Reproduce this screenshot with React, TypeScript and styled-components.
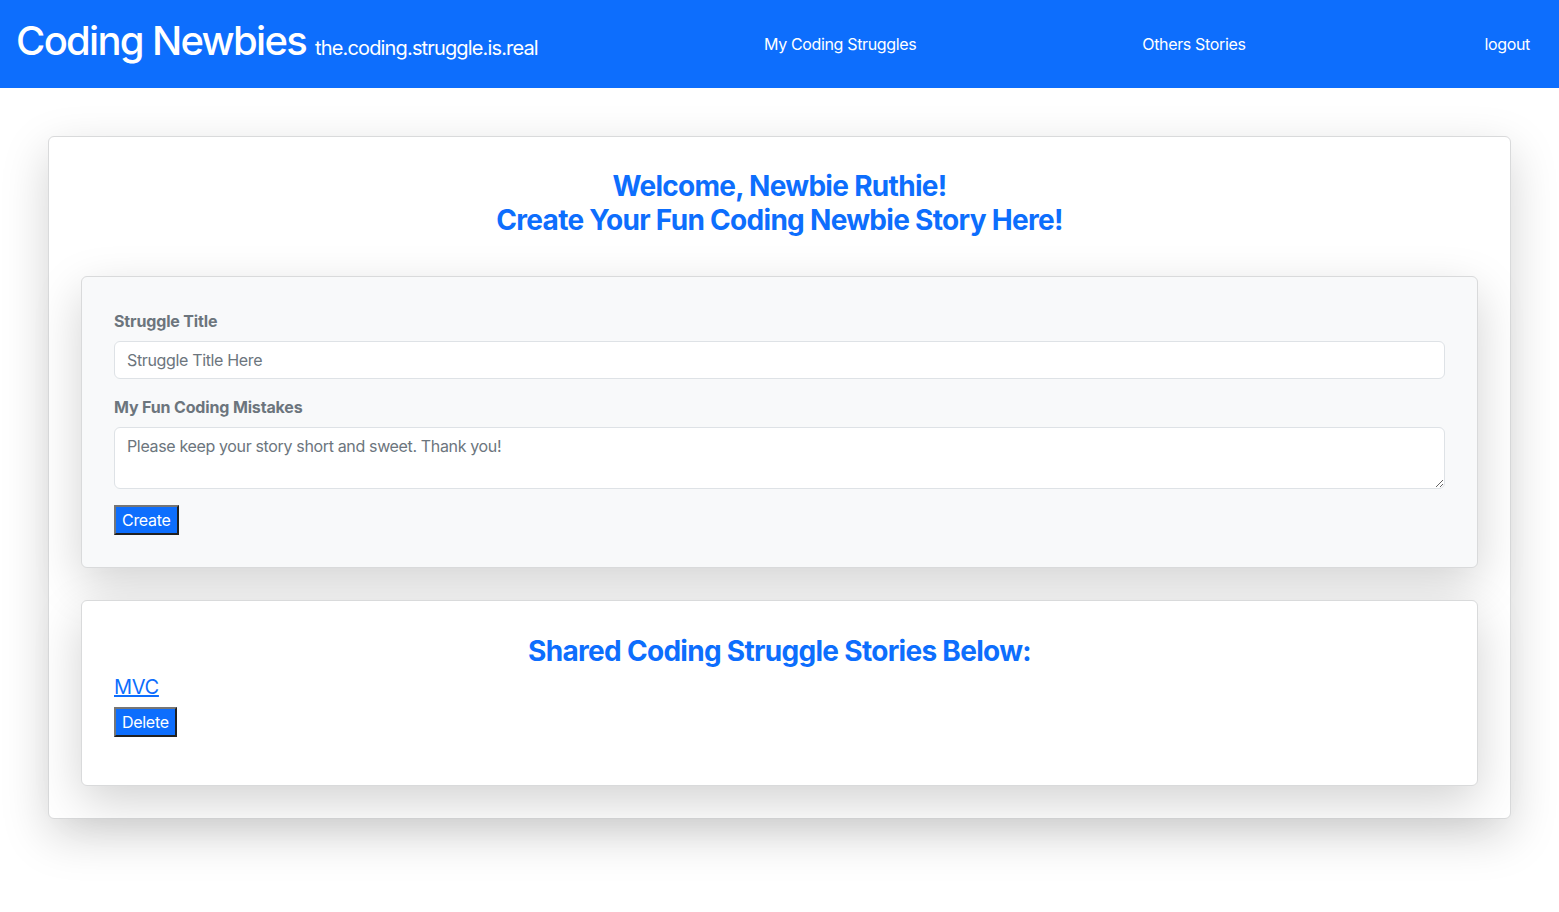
import React from 'react';
import styled, { createGlobalStyle } from 'styled-components';

const GlobalStyle = createGlobalStyle`
  * { box-sizing: border-box; }
  body {
    margin: 0;
    font-family: "Inter", "Liberation Sans", sans-serif;
    font-size: 16px;
    line-height: 1.5;
    color: #212529;
    background: #fff;
  }
`;

const App: React.FC = () => {
  return (
    <>
      <GlobalStyle />
      <Navbar>
        <Brand>
          <BrandTitle>Coding Newbies</BrandTitle>
          <BrandTag>the.coding.struggle.is.real</BrandTag>
        </Brand>
        <NavLinks>
          <NavLink href="#" $space={0}>My Coding Struggles</NavLink>
          <NavLink href="#" $space={226}>Others Stories</NavLink>
          <NavLink href="#" $space={239}>logout</NavLink>
        </NavLinks>
      </Navbar>

      <Main>
        <OuterCard>
          <Heading>
            Welcome, Newbie Ruthie!
            <br />
            Create Your Fun Coding Newbie Story Here!
          </Heading>

          <InnerCard $bg="#f8f9fa">
            <form onSubmit={(e) => e.preventDefault()}>
              <Field>
                <Label htmlFor="title">Struggle Title</Label>
                <Input id="title" type="text" placeholder="Struggle Title Here" />
              </Field>
              <Field>
                <Label htmlFor="story">My Fun Coding Mistakes</Label>
                <TextArea
                  id="story"
                  rows={2}
                  placeholder="Please keep your story short and sweet. Thank you!"
                />
              </Field>
              <Button type="submit">Create</Button>
            </form>
          </InnerCard>

          <InnerCard $bg="#fff">
            <Heading>Shared Coding Struggle Stories Below:</Heading>
            <StoryLink href="#">MVC</StoryLink>
            <StoryActions>
              <Button type="button">Delete</Button>
            </StoryActions>
          </InnerCard>
        </OuterCard>
      </Main>
    </>
  );
};

export default App;

const Navbar = styled.nav`
  height: 88px;
  background: #0d6efd;
  display: flex;
  align-items: center;
  padding: 0 29px 0 16px;
  color: #fff;
`;

const Brand = styled.div`
  display: flex;
  align-items: baseline;
  gap: 9px;
  margin-top: -6px;
`;

const BrandTitle = styled.span`
  font-size: 40px;
  font-weight: 500;
  letter-spacing: -1.7px;
  line-height: 1.2;
`;

const BrandTag = styled.span`
  font-size: 20px;
  font-weight: 400;
  letter-spacing: -0.85px;
`;

const NavLinks = styled.div`
  margin-left: auto;
  display: flex;
  align-items: center;
`;

const NavLink = styled.a<{ $space: number }>`
  margin-left: ${({ $space }) => $space}px;
  color: #fff;
  text-decoration: none;
  font-size: 16px;
  font-weight: 400;
  letter-spacing: -0.35px;
`;

const Main = styled.main`
  padding: 48px 48px 80px 48px;
`;

const OuterCard = styled.section`
  border: 1px solid #d9dadb;
  border-radius: 6px;
  background: #fff;
  padding: 33px 32px 32px;
  box-shadow: 0 1rem 3rem rgba(0, 0, 0, 0.175);
  display: flex;
  flex-direction: column;
  gap: 32px;
`;

const Heading = styled.h3`
  margin: 0 0 7px 0;
  text-align: center;
  color: #0d6efd;
  font-size: 28px;
  font-weight: 700;
  line-height: 1.2;
  letter-spacing: -0.7px;
`;

const InnerCard = styled.div<{ $bg: string }>`
  background: ${({ $bg }) => $bg};
  border: 1px solid #d9dadb;
  border-radius: 6px;
  padding: 32px;
  box-shadow: 0 1rem 3rem rgba(0, 0, 0, 0.175);

  ${Heading} {
    margin: 2px 0 6px;
  }
`;

const Field = styled.div`
  margin-bottom: 16px;
`;

const Label = styled.label`
  display: block;
  margin-bottom: 8px;
  font-weight: 700;
  color: #6c757d;
  letter-spacing: -0.15px;
`;

const inputStyles = `
  display: block;
  width: 100%;
  padding: 6px 12px;
  font-family: inherit;
  font-size: 16px;
  line-height: 1.5;
  letter-spacing: -0.35px;
  color: #212529;
  background: #fff;
  border: 1px solid #dee2e6;
  border-radius: 6px;
  &::placeholder { color: #6c757d; }
`;

const Input = styled.input`
  ${inputStyles}
`;

const TextArea = styled.textarea`
  ${inputStyles}
  resize: vertical;
`;

const Button = styled.button`
  font-family: inherit;
  font-size: 16px;
  line-height: 1.5;
  letter-spacing: -0.3px;
  padding: 1px 6px;
  color: #fff;
  background: #0d6efd;
  border: 2px outset #767676;
  cursor: pointer;
`;

const StoryLink = styled.a`
  align-self: flex-start;
  display: inline-block;
  font-size: 20px;
  line-height: 1.2;
  letter-spacing: -0.3px;
  color: #0d6efd;
  text-decoration: underline;
  margin-bottom: 8px;
`;

const StoryActions = styled.div`
  margin-bottom: 16px;
`;
